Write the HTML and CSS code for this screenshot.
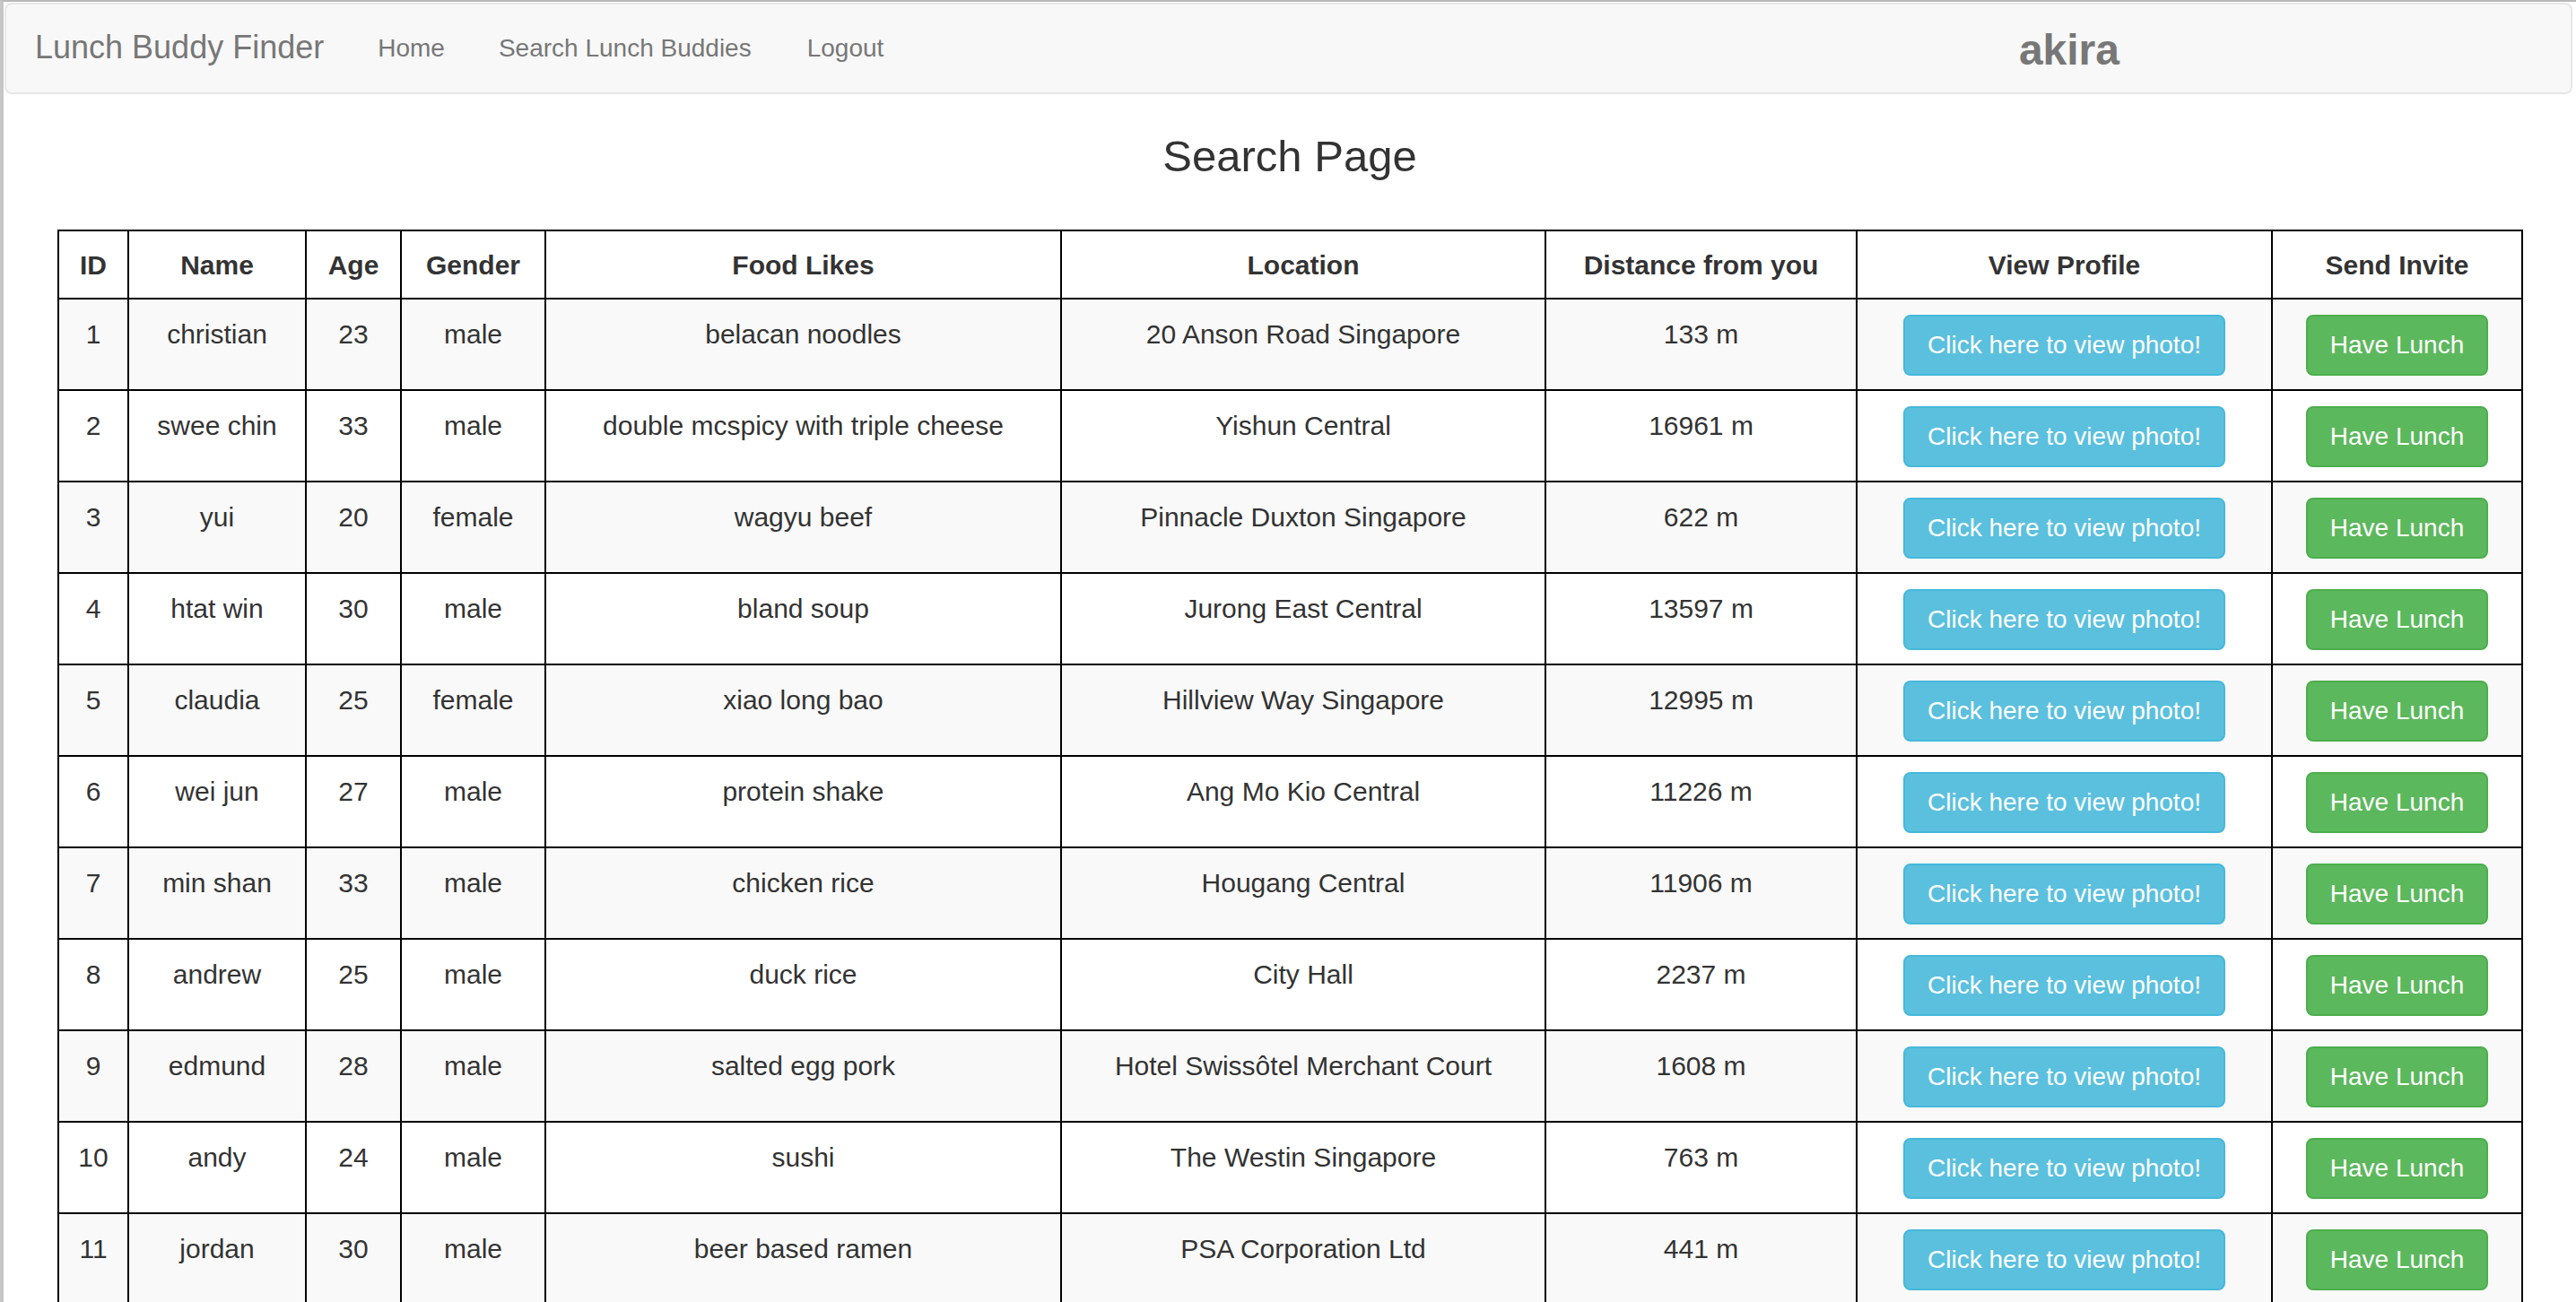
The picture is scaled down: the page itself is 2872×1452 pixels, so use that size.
FILE: index.html
```html
<!DOCTYPE html>
<html lang="en">
<head>
<meta charset="utf-8">
<title>Lunch Buddy Finder</title>
<link rel="stylesheet" href="styles.css">
</head>
<body>
<div class="frame">
  <nav class="navbar">
    <a class="brand" href="#">Lunch Buddy Finder</a>
    <ul class="nav">
      <li><a href="#">Home</a></li>
      <li><a href="#">Search Lunch Buddies</a></li>
      <li><a href="#">Logout</a></li>
    </ul>
    <div class="user">akira</div>
  </nav>
  <h1 class="title">Search Page</h1>
  <table class="buddies">
    <colgroup>
      <col class="c-id"><col class="c-name"><col class="c-age"><col class="c-gender"><col class="c-food"><col class="c-loc"><col class="c-dist"><col class="c-view"><col class="c-invite">
    </colgroup>
    <thead>
      <tr><th>ID</th><th>Name</th><th>Age</th><th>Gender</th><th>Food Likes</th><th>Location</th><th>Distance from you</th><th>View Profile</th><th>Send Invite</th></tr>
    </thead>
    <tbody>
      <tr><td>1</td><td>christian</td><td>23</td><td>male</td><td>belacan noodles</td><td>20 Anson Road Singapore</td><td>133 m</td><td><a class="btn btn-info" href="#">Click here to view photo!</a></td><td><a class="btn btn-success" href="#">Have Lunch</a></td></tr>
      <tr><td>2</td><td>swee chin</td><td>33</td><td>male</td><td>double mcspicy with triple cheese</td><td>Yishun Central</td><td>16961 m</td><td><a class="btn btn-info" href="#">Click here to view photo!</a></td><td><a class="btn btn-success" href="#">Have Lunch</a></td></tr>
      <tr><td>3</td><td>yui</td><td>20</td><td>female</td><td>wagyu beef</td><td>Pinnacle Duxton Singapore</td><td>622 m</td><td><a class="btn btn-info" href="#">Click here to view photo!</a></td><td><a class="btn btn-success" href="#">Have Lunch</a></td></tr>
      <tr><td>4</td><td>htat win</td><td>30</td><td>male</td><td>bland soup</td><td>Jurong East Central</td><td>13597 m</td><td><a class="btn btn-info" href="#">Click here to view photo!</a></td><td><a class="btn btn-success" href="#">Have Lunch</a></td></tr>
      <tr><td>5</td><td>claudia</td><td>25</td><td>female</td><td>xiao long bao</td><td>Hillview Way Singapore</td><td>12995 m</td><td><a class="btn btn-info" href="#">Click here to view photo!</a></td><td><a class="btn btn-success" href="#">Have Lunch</a></td></tr>
      <tr><td>6</td><td>wei jun</td><td>27</td><td>male</td><td>protein shake</td><td>Ang Mo Kio Central</td><td>11226 m</td><td><a class="btn btn-info" href="#">Click here to view photo!</a></td><td><a class="btn btn-success" href="#">Have Lunch</a></td></tr>
      <tr><td>7</td><td>min shan</td><td>33</td><td>male</td><td>chicken rice</td><td>Hougang Central</td><td>11906 m</td><td><a class="btn btn-info" href="#">Click here to view photo!</a></td><td><a class="btn btn-success" href="#">Have Lunch</a></td></tr>
      <tr><td>8</td><td>andrew</td><td>25</td><td>male</td><td>duck rice</td><td>City Hall</td><td>2237 m</td><td><a class="btn btn-info" href="#">Click here to view photo!</a></td><td><a class="btn btn-success" href="#">Have Lunch</a></td></tr>
      <tr><td>9</td><td>edmund</td><td>28</td><td>male</td><td>salted egg pork</td><td>Hotel Swissôtel Merchant Court</td><td>1608 m</td><td><a class="btn btn-info" href="#">Click here to view photo!</a></td><td><a class="btn btn-success" href="#">Have Lunch</a></td></tr>
      <tr><td>10</td><td>andy</td><td>24</td><td>male</td><td>sushi</td><td>The Westin Singapore</td><td>763 m</td><td><a class="btn btn-info" href="#">Click here to view photo!</a></td><td><a class="btn btn-success" href="#">Have Lunch</a></td></tr>
      <tr><td>11</td><td>jordan</td><td>30</td><td>male</td><td>beer based ramen</td><td>PSA Corporation Ltd</td><td>441 m</td><td><a class="btn btn-info" href="#">Click here to view photo!</a></td><td><a class="btn btn-success" href="#">Have Lunch</a></td></tr>
    </tbody>
  </table>
</div>
</body>
</html>
```

FILE: styles.css
```css
html, body {
  margin: 0;
  padding: 0;
  background: #ffffff;
}

body {
  font-family: "Liberation Sans", Arial, Helvetica, sans-serif;
  font-size: 28px;
  line-height: 40px;
  color: #333333;
}

.frame {
  border-left: 4px solid #c6c6c6;
  border-top: 2px solid #b9b9b9;
  min-height: 1460px;
  box-sizing: border-box;
}

.navbar {
  display: flex;
  align-items: flex-start;
  height: 98px;
  margin: 1px 4px 0 1px;
  background: #f8f8f8;
  border: 2px solid #e7e7e7;
  border-radius: 8px;
}

.brand {
  display: block;
  padding: 28px 30px 30px 30px;
  margin-left: 2px;
  font-size: 36px;
  line-height: 40px;
  color: #777777;
  text-decoration: none;
}

.nav {
  display: flex;
  list-style: none;
  margin: 0;
  padding: 0;
}

.nav a {
  display: block;
  padding: 29px 30px;
  font-size: 28px;
  line-height: 40px;
  color: #777777;
  text-decoration: none;
}

.nav li:last-child a {
  padding-left: 32px;
}

.user {
  margin-left: auto;
  margin-right: 503px;
  margin-top: 25px;
  font-size: 48px;
  line-height: 52px;
  font-weight: bold;
  color: #777777;
}

.title {
  margin: 43px 0 55px 0;
  text-align: center;
  font-size: 49px;
  line-height: 53px;
  font-weight: normal;
  color: #333333;
}

.buddies {
  margin-left: 60px;
  width: 2749px;
  table-layout: fixed;
  border-collapse: collapse;
  border: 2px solid #000000;
}

.c-id { width: 78px; }
.c-name { width: 198px; }
.c-age { width: 106px; }
.c-gender { width: 161px; }
.c-food { width: 575px; }
.c-loc { width: 540px; }
.c-dist { width: 347px; }
.c-view { width: 463px; }
.c-invite { width: 279px; }

.buddies th,
.buddies td {
  border: 2px solid #000000;
  text-align: center;
  vertical-align: top;
  font-size: 30px;
  line-height: 44px;
  white-space: nowrap;
}

.buddies th {
  padding: 16px 6px 14px 6px;
  font-weight: bold;
  color: #333333;
  background: #ffffff;
}

.buddies td {
  padding: 17px 6px 15px 6px;
  color: #333333;
}

.buddies tbody tr:nth-child(odd) td {
  background: #f9f9f9;
}

.btn {
  display: inline-block;
  vertical-align: top;
  padding: 12px 25px;
  font-size: 28px;
  line-height: 40px;
  border: 2px solid transparent;
  border-radius: 8px;
  color: #ffffff;
  text-decoration: none;
  white-space: nowrap;
}

.btn-info {
  background: #5bc0de;
  border-color: #46b8da;
}

.btn-success {
  background: #5cb85c;
  border-color: #4cae4c;
}
```
